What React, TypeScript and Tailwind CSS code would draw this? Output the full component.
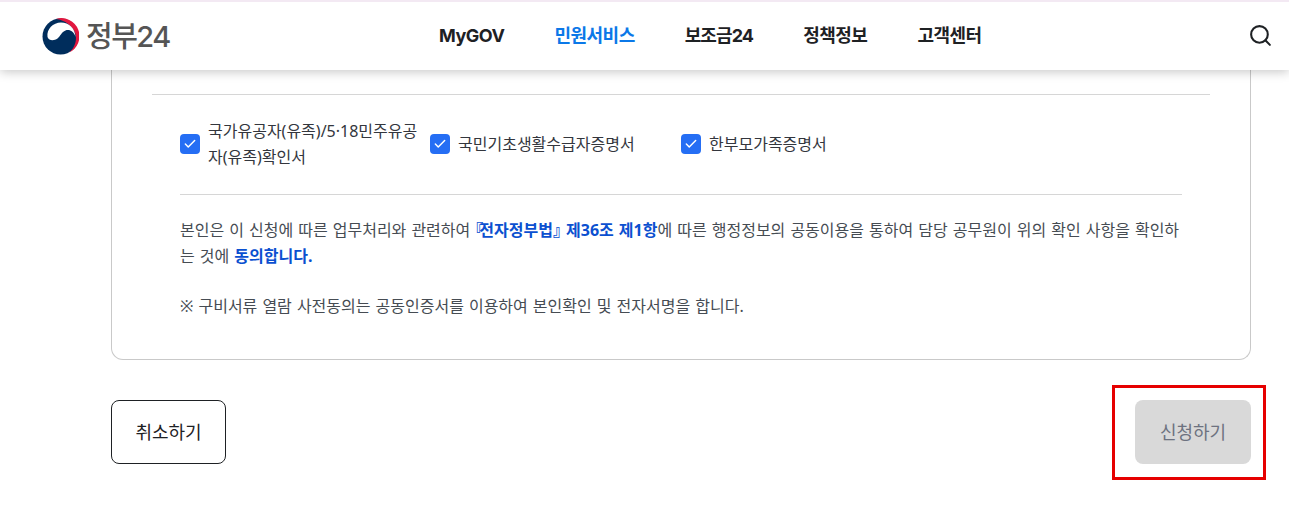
import { Check, Search } from "lucide-react";

const NAV = ["MyGOV", "민원서비스", "보조금24", "정책정보", "고객센터"];
const DOCS = [
  { label: "국가유공자(유족)/5·18민주유공자(유족)확인서", width: "w-[250px]" },
  { label: "국민기초생활수급자증명서", width: "w-[251px]" },
  { label: "한부모가족증명서", width: "w-[200px]" },
];

function Logo() {
  return (
    <div className="flex items-center gap-[7px]">
      <svg width="37" height="37" viewBox="0 0 37 37">
        <circle cx="18.5" cy="18.5" r="18" fill="#002d5c" />
        <path d="M14 1A18 18 0 0 1 27 34.500C33 30 35 22 33.500 16C31 8 23 2 14 1Z" fill="#e2173f" />
        <path d="M5.500 19C4.500 11 11 4.500 19 4.500C27 4.500 33 10 33.500 19C32 13 27 11 23.500 12.500C19.500 14 18.500 18 15.500 20.500C12 23 7 23 5.500 19Z" fill="#ffffff" />
      </svg>
      <span className="text-[29px] font-medium leading-none tracking-[-1.5px] text-[#555555] font-['Inter','Noto_Sans_CJK_KR',sans-serif]">
        정부24
      </span>
    </div>
  );
}

function DocCheck({ label, width }: { label: string; width: string }) {
  return (
    <label className={`flex items-center gap-2 ${width}`}>
      <span className="flex h-5 w-5 shrink-0 items-center justify-center rounded-[4px] bg-[#256ef4]">
        <Check size={14} strokeWidth={2.5} className="text-white" />
      </span>
      <span className="w-[212px] shrink-0 break-all text-[16px] leading-[26px] text-[#33363d]">{label}</span>
    </label>
  );
}

function navClass(item: string) {
  if (item === "민원서비스") return "text-[#0b78e8]";
  if (item === "보조금24") return "tracking-[-0.9px]";
  return "";
}

export default function App() {
  return (
    <div className="relative h-[526px] overflow-hidden bg-white font-['Noto_Sans','Noto_Sans_CJK_KR',sans-serif]">
      <header className="relative z-10 flex h-[70px] items-center justify-between border-t-2 border-t-[#f3e9f3] bg-white pl-[42px] pr-[16px] shadow-[0_2px_10px_rgba(0,0,0,0.22)]">
        <Logo />
        <nav className="absolute left-[439px] top-[20px] flex gap-[50px] font-['Inter','Noto_Sans_CJK_KR',sans-serif] text-[18px] font-bold leading-[28px] tracking-[-0.5px] text-[#1e2124]">
          {NAV.map((item) => (
            <a key={item} className={navClass(item)}>
              {item}
            </a>
          ))}
        </nav>
        <Search size={25} strokeWidth={2} className="-translate-y-px text-[#1e2124]" />
      </header>

      <main className="pl-[111px] pr-[38px]">
        <section className="h-[290px] rounded-b-[12px] border border-t-0 border-[#c9c9c9] px-10 pt-6">
          <hr className="border-[#d6d6d6]" />
          <div className="mx-7 mt-[12px] flex h-[74px] items-center">
            {DOCS.map((doc) => (
              <DocCheck key={doc.label} {...doc} />
            ))}
          </div>
          <div className="mx-7 mt-[13px] border-t border-[#d6d6d6] pt-[22px] text-[16px] leading-[26px] text-[#464c53] [word-spacing:0.9px]">
            <p className="break-all">
              본인은 이 신청에 따른 업무처리와 관련하여{" "}
              <strong className="font-bold text-[#0b50d0]">
                <span className="tracking-[-4px] [font-feature-settings:'halt']">『</span>전자정부법<span className="[font-feature-settings:'halt']">』</span> 제36조 제1항
              </strong>
              에 따른 행정정보의 공동이용을 통하여 담당 공무원이 위의 확인 사항을 확인하는 것에{" "}
              <strong className="font-bold text-[#0b50d0]">동의합니다.</strong>
            </p>
            <p className="mt-[24px]">※ 구비서류 열람 사전동의는 공동인증서를 이용하여 본인확인 및 전자서명을 합니다.</p>
          </div>
        </section>

        <div className="mt-10 flex justify-between">
          <button className="h-16 w-[115px] rounded-[8px] border border-[#1e2124] bg-white text-[18px] text-[#1e2124]">
            취소하기
          </button>
          <button className="h-16 w-[116px] rounded-[8px] bg-[#d9d9d9] text-[18px] text-[#6d7280]">
            신청하기
          </button>
        </div>
      </main>

      {/* red highlight around submit */}
      <div className="absolute left-[1112px] top-[385px] h-[95px] w-[154px] border-[3px] border-[#e60000]" />
    </div>
  );
}
